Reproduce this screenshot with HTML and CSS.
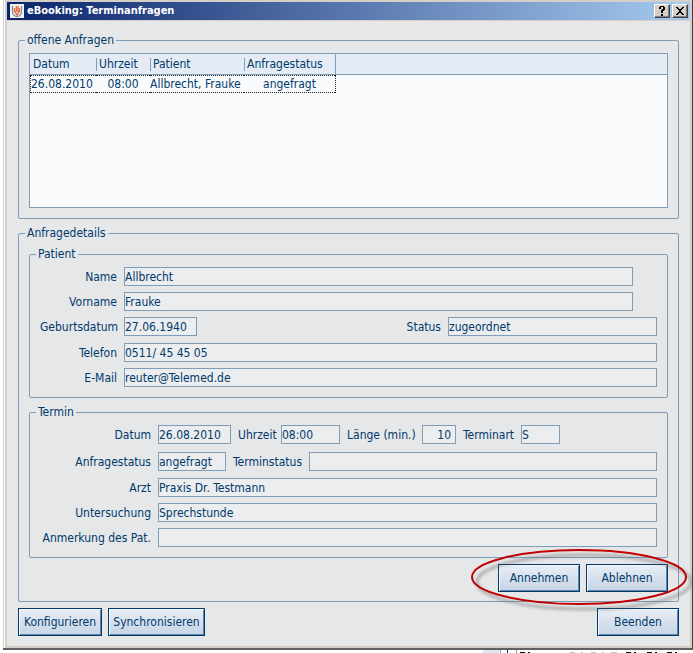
FILE: index.html
```html
<!DOCTYPE html>
<html lang="de">
<head>
<meta charset="utf-8">
<title>eBooking: Terminanfragen</title>
<link rel="stylesheet" href="styles.css">
</head>
<body>
<main class="window">
  <header class="titlebar">
    <svg class="app-icon" viewBox="0 0 14 14" aria-hidden="true">
      <rect width="14" height="14" fill="#f6f1ee"/>
      <path d="M2.500 2v5q0 5 4.500 5.500q4.500-.5 4.500-5.500V2" fill="none" stroke="#7391a5" stroke-width="1.300"/>
      <path d="M4.500 4v3l2.500 4 2.500-4V4M6.300 2v6M8 2v6" fill="none" stroke="#ee5a35" stroke-width="1.200"/>
    </svg>
    <h1>eBooking: Terminanfragen</h1>
    <button class="caption" type="button" aria-label="Hilfe"><svg viewBox="0 0 12 10" shape-rendering="crispEdges"><path d="M3 1h1V0h4v1h1v3H8v1H7v2H5V4h1V3h1V1H5v2H3zM5 8h2v2H5z"/></svg></button>
    <button class="caption" type="button" aria-label="Schließen"><svg viewBox="0 0 12 10" shape-rendering="crispEdges"><path d="M2 1h2v1h1v1h2V2h1V1h2v1H9v1H8v1H7v2h1v1h1v1h1v1H8V8H7V7H5v1H4v1H2V8h1V7h1V6h1V4H4V3H3V2H2z"/></svg></button>
  </header>
  <form class="content">
    <fieldset>
      <legend>offene Anfragen</legend>
      <div class="list">
        <table>
          <thead><tr><th class="c-date">Datum</th><th class="c-time">Uhrzeit</th><th class="c-patient">Patient</th><th class="c-status">Anfragestatus</th><th></th></tr></thead>
          <tbody><tr><td>26.08.2010</td><td class="center">08:00</td><td>Allbrecht, Frauke</td><td class="center">angefragt</td><td></td></tr></tbody>
        </table>
      </div>
    </fieldset>
    <fieldset class="details">
      <legend>Anfragedetails</legend>
      <fieldset class="group patient">
        <legend>Patient</legend>
        <div class="row short"><label for="name">Name</label><input id="name" value="Allbrecht" readonly></div>
        <div class="row short"><label for="vorname">Vorname</label><input id="vorname" value="Frauke" readonly></div>
        <div class="row spaced"><label for="geb">Geburtsdatum</label><input class="w-date" id="geb" value="27.06.1940" readonly><label class="push" for="status">Status</label><input class="w-status" id="status" value="zugeordnet" readonly></div>
        <div class="row"><label for="tel">Telefon</label><input id="tel" value="0511/ 45 45 05" readonly></div>
        <div class="row"><label for="mail">E-Mail</label><input id="mail" value="reuter@Telemed.de" readonly></div>
      </fieldset>
      <fieldset class="group termin">
        <legend>Termin</legend>
        <div class="row wide"><label for="datum">Datum</label><input class="w-date" id="datum" value="26.08.2010" readonly><label class="l-time" for="zeit">Uhrzeit</label><input class="w-time" id="zeit" value="08:00" readonly><label class="l-length" for="dauer">Länge (min.)</label><input class="w-length" id="dauer" value="10" readonly><label class="l-kind" for="art">Terminart</label><input class="w-kind" id="art" value="S" readonly></div>
        <div class="row spaced"><label for="astatus">Anfragestatus</label><input class="w-request" id="astatus" value="angefragt" readonly><label class="l-state" for="tstatus">Terminstatus</label><input id="tstatus" readonly></div>
        <div class="row"><label for="arzt">Arzt</label><input id="arzt" value="Praxis Dr. Testmann" readonly></div>
        <div class="row"><label for="unt">Untersuchung</label><input id="unt" value="Sprechstunde" readonly></div>
        <div class="row"><label for="anm">Anmerkung des Pat.</label><input id="anm" readonly></div>
      </fieldset>
      <div class="actions">
        <button class="btn w-btn" type="button">Annehmen</button>
        <button class="btn w-btn" type="button">Ablehnen</button>
        <svg class="marker" viewBox="0 0 228 76" aria-hidden="true">
          <defs><filter id="soft" x="-10%" y="-20%" width="120%" height="150%"><feGaussianBlur stdDeviation="1.500"/></filter></defs>
          <ellipse cx="115" cy="38" rx="107" ry="27" fill="none" stroke="#555" stroke-opacity=".4" stroke-width="3" filter="url(#soft)"/>
          <ellipse cx="110" cy="33" rx="107" ry="27" fill="none" stroke="#c00000" stroke-width="2"/>
        </svg>
      </div>
    </fieldset>
    <div class="footer">
      <button class="btn w-config" type="button">Konfigurieren</button>
      <button class="btn w-sync" type="button">Synchronisieren</button>
      <button class="btn w-btn end" type="button">Beenden</button>
    </div>
  </form>
</main>
<svg class="behind" viewBox="0 0 210 3" shape-rendering="crispEdges" aria-hidden="true">
  <path d="M0 0h16v3H0z" fill="#dfe8f2"/>
  <path d="M17 0h1v3h-1zM33 0h1v3h-1z" fill="#7f9db9"/>
  <path d="M24 0h1v3h-1z" fill="#003a6b"/>
  <path d="M37 2h5v1h-5zM45 2h2v1h-2zM143 2h5v1h-5zM151 2h2v1h-2zM164 2h5v1h-5zM172 2h2v1h-2zM184 2h5v1h-5zM192 2h2v1h-2z" fill="#000"/>
  <path d="M87 2h5v1h-5zM98 2h2v1h-2zM108 2h5v1h-5zM119 2h2v1h-2zM128 2h6v1h-6z" fill="#c0c0c0"/>
</svg>
</body>
</html>
```
FILE: styles.css
```css
* { box-sizing: border-box; }
body {
  margin: 0;
  background: #fff;
  color: #003a6b;
  font: 12px/16px "DejaVu Sans Condensed", "DejaVu Sans", sans-serif;
  overflow: hidden;
}
input, button { font: inherit; color: inherit; }
.window {
  margin-left: 3px;
  padding: 2px 2px 2px 4px;
  background: #e6e7e9;
  border: solid #404040;
  border-width: 0 1px 2px 0;
  border-bottom-color: #606060;
  box-shadow:
    inset 1px 0 #d4d0c8,
    inset 2px 0 #fff,
    inset 4px 2px #d4d0c8,
    inset -2px -2px #d4d0c8;
}
.titlebar {
  display: flex;
  align-items: center;
  height: 18px;
  padding: 0 2px 0 3px;
  background: linear-gradient(90deg, #0a246a, #a6caf0);
}
.app-icon { width: 14px; height: 14px; }
h1 {
  flex: 1;
  margin: 0 0 0 3px;
  color: #fff;
  font-size: 11px;
  line-height: 16px;
}
.caption {
  width: 16px;
  height: 14px;
  margin-left: 2px;
  padding: 0 1px;
  background: #d4d0c8;
  border: 1px solid;
  border-color: #fff #404040 #404040 #fff;
  box-shadow: inset -1px -1px #808080;
}
.caption svg { display: block; width: 12px; height: 10px; }
.content { padding: 11px 11px 10px; border-top: 1px solid #d4d0c8; }
fieldset {
  min-width: 0;
  margin: 0;
  padding: 5px 10px 10px;
  border: 1px solid #7f9db9;
  border-radius: 2px;
}
legend { margin-left: -4px; padding: 0 2px; line-height: 16px; }
.list { height: 155px; border: 1px solid #7f9db9; background: #f8fafc; }
table { width: 100%; table-layout: fixed; border-collapse: separate; border-spacing: 0; }
th {
  height: 21px;
  padding: 0 3px;
  background: #e4ebf4;
  border-bottom: 1px solid #7f9db9;
  font-weight: 400;
  text-align: left;
}
th + th { background: linear-gradient(#7f9db9, #7f9db9) 0 4px / 1px 13px no-repeat #e4ebf4; }
th:last-child { border-left: 1px solid #7f9db9; background: #e4ebf4; }
.c-date { width: 66px; }
.c-time { width: 54px; }
.c-patient { width: 94px; }
.c-status { width: 91px; }
td { height: 18px; padding: 0; white-space: nowrap; border: dotted #222; border-width: 1px 0; }
td:first-child { border-left-width: 1px; }
td:last-child { border-width: 0 0 0 1px; }
.center { text-align: center; }
.details { margin-top: 6px; padding-bottom: 9px; }
.row { display: flex; align-items: center; gap: 7px; margin-bottom: 6px; }
.row.spaced { margin-bottom: 7px; }
.row.wide { margin-bottom: 8px; }
.row:last-child { margin-bottom: 0; }
.row label { min-width: 0; text-align: right; white-space: nowrap; }
.patient label:first-child { flex: 0 0 77px; }
.termin label:first-child { flex: 0 0 111px; }
.short { padding-right: 24px; }
.row input {
  flex: 1;
  min-width: 0;
  height: 19px;
  padding: 0;
  background: #ebedef;
  border: 1px solid #7f9db9;
  outline: 0;
}
.row .w-date { flex: 0 0 73px; }
.row .w-status { flex: 0 0 209px; }
.row .w-time { flex: 0 0 59px; }
.row .w-length { flex: 0 0 34px; padding-right: 4px; text-align: right; }
.row .w-kind { flex: 0 0 39px; }
.row .w-request { flex: 0 0 68px; }
.l-time { width: 36px; }
.l-length { width: 68px; }
.l-kind { width: 51px; }
.l-state { width: 69px; }
.push { margin-left: auto; }
.termin { margin-top: 6px; }
.actions, .footer { display: flex; gap: 6px; margin-top: 6px; }
.actions { position: relative; justify-content: flex-end; }
.marker {
  position: absolute;
  right: -29px;
  top: -20px;
  width: 228px;
  height: 76px;
  pointer-events: none;
}
.btn {
  height: 28px;
  padding: 0;
  border: 1px solid #003a6b;
  background: linear-gradient(#e8eef6, #c6d4e4);
  box-shadow: inset 1px 1px #f4f8fc, inset -1px -1px #5f84a8;
  white-space: nowrap;
}
.w-btn { width: 82px; }
.w-config { width: 84px; }
.w-sync { width: 97px; }
.end { margin-left: auto; }
.behind { display: block; width: 210px; height: 3px; margin-left: auto; }
```
